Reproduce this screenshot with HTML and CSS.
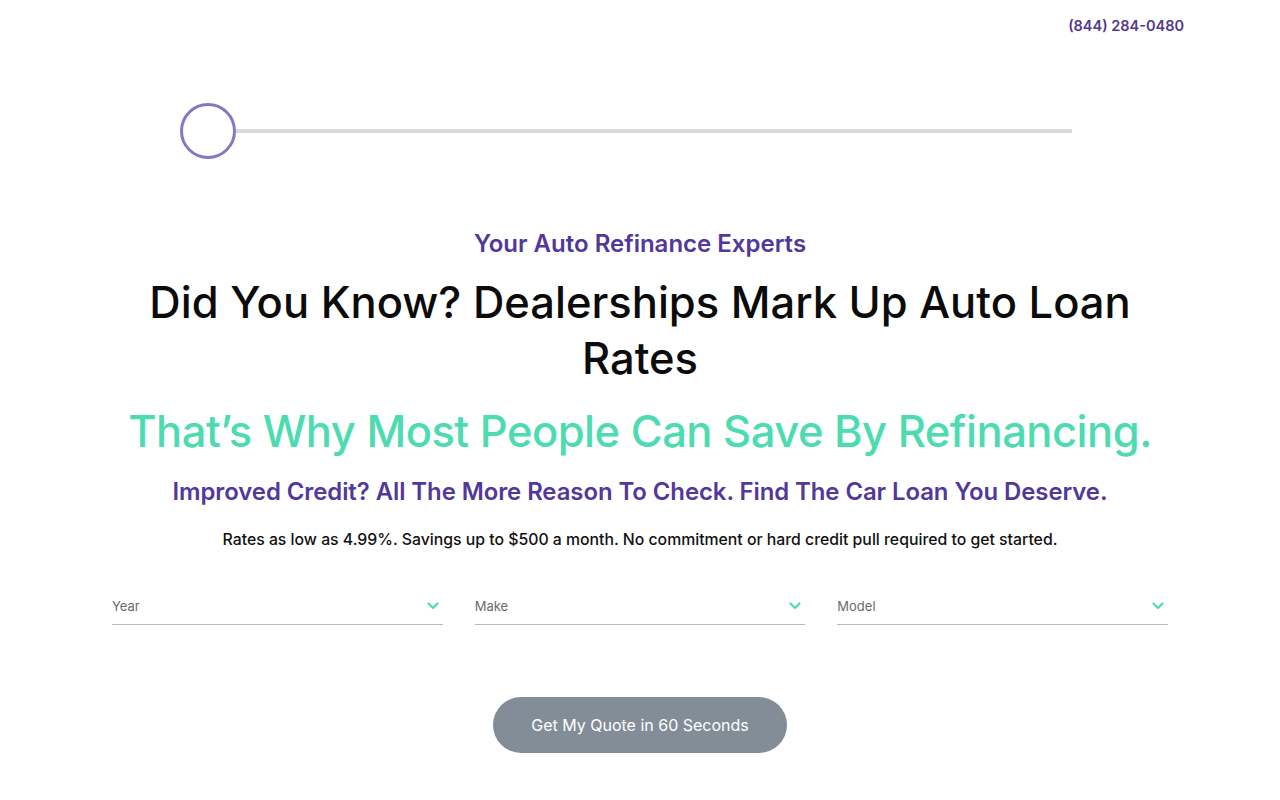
FILE: index.html
```html
<!DOCTYPE html>
<html lang="en">
<head>
<meta charset="utf-8">
<title>Auto Refinance</title>
<link rel="stylesheet" href="styles.css">
</head>
<body>
<header class="topbar">
  <a class="phone" href="#">(844) 284-0480</a>
</header>
<div class="progress">
  <div class="progress-dot"></div>
  <div class="progress-line"></div>
</div>
<main class="hero">
  <p class="eyebrow">Your Auto Refinance Experts</p>
  <h1 class="title">Did You Know? Dealerships Mark Up Auto Loan Rates</h1>
  <h2 class="accent">That’s Why Most People Can Save By Refinancing.</h2>
  <h3 class="sub">Improved Credit? All The More Reason To Check. Find The Car Loan You Deserve.</h3>
  <p class="note">Rates as low as 4.99%. Savings up to $500 a month. No commitment or hard credit pull required to get started.</p>
  <form class="fields">
    <div class="field"><span class="label">Year</span>
      <svg class="chev" viewBox="0 0 12 8" width="12" height="8"><path d="M1.5 1.5 L6 6 L10.5 1.5" fill="none" stroke="#4fdcb2" stroke-width="2.2" stroke-linecap="round" stroke-linejoin="round"/></svg></div>
    <div class="field"><span class="label">Make</span>
      <svg class="chev" viewBox="0 0 12 8" width="12" height="8"><path d="M1.5 1.5 L6 6 L10.5 1.5" fill="none" stroke="#4fdcb2" stroke-width="2.2" stroke-linecap="round" stroke-linejoin="round"/></svg></div>
    <div class="field"><span class="label">Model</span>
      <svg class="chev" viewBox="0 0 12 8" width="12" height="8"><path d="M1.5 1.5 L6 6 L10.5 1.5" fill="none" stroke="#4fdcb2" stroke-width="2.2" stroke-linecap="round" stroke-linejoin="round"/></svg></div>
  </form>
  <div class="cta-wrap"><button class="cta" type="button">Get My Quote in 60 Seconds</button></div>
</main>
</body>
</html>
```
FILE: styles.css
```css
* { box-sizing: border-box; }
html, body { margin: 0; padding: 0; background: #fff; }
body { font-family: Inter, "Noto Sans", sans-serif; color: #111; width: 1280px; }
.topbar { display: flex; justify-content: flex-end; padding: 17px 96px 0 0; height: 40px; }
.phone { color: #51398f; font-size: 14.5px; font-weight: 600; text-decoration: none; }
.progress { display: flex; align-items: center; margin: 63px 0 0 180px; width: 892px; }
.progress-dot { width: 56px; height: 56px; border: 3px solid #8876c2; border-radius: 50%; flex: none; }
.progress-line { flex: 1; height: 4px; background: #d9dbdb; }
.hero { display: flex; flex-direction: column; align-items: center; text-align: center; padding-top: 69px; }
.eyebrow { margin: 0; color: #51389a; font-size: 24px; font-weight: 600; line-height: 32px; }
.title { margin: 14px 0 0; width: 1000px; font-size: 43.5px; font-weight: 500; line-height: 56px; color: #0b0b0b; letter-spacing: 0; }
.accent { margin: 15px 0 0; font-size: 43.5px; font-weight: 500; line-height: 60px; color: #4ddbb1; letter-spacing: -0.5px; }
.sub { margin: 15px 0 0; font-size: 23.9px; font-weight: 600; line-height: 32px; color: #51389a; letter-spacing: -0.05px; }
.note { margin: 20px 0 0; font-size: 15.8px; font-weight: 500; line-height: 24px; color: #111; }
.fields { display: grid; grid-template-columns: repeat(3, 1fr); gap: 32px; width: 1056px; margin-top: 37px; }
.field { display: flex; justify-content: space-between; align-items: center; border-bottom: 1px solid #b8b8b8; height: 36px; padding: 0 4px 2px 0; }
.label { font-size: 13px; color: #6b6b6b; }
.chev { display: block; }
.cta-wrap { margin-top: 72px; }
.cta { width: 294px; height: 56px; border: 0; border-radius: 28px; background: #838d97; color: #fff; font-family: inherit; font-size: 16px; font-weight: 400; }
```
